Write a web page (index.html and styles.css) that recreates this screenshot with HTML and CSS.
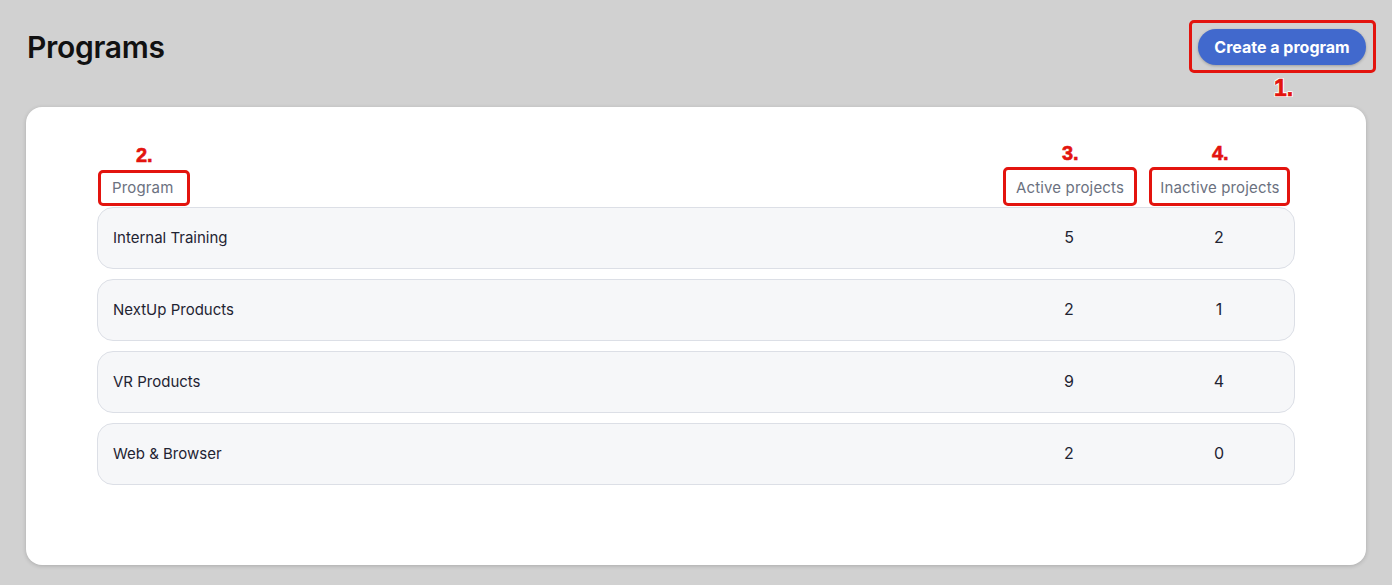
FILE: index.html
```html
<!DOCTYPE html>
<html lang="en">
<head>
<meta charset="utf-8">
<title>Programs</title>
<link rel="stylesheet" href="styles.css">
</head>
<body>
<div class="page">
  <header class="topbar">
    <h1 class="title">Programs</h1>
    <button class="btn-primary">Create a program</button>
  </header>
  <main class="card">
    <div class="table">
      <div class="thead">
        <div class="th th-name">Program</div>
        <div class="th th-num">Active projects</div>
        <div class="th th-num">Inactive projects</div>
      </div>
      <div class="tbody">
        <div class="tr"><div class="td td-name">Internal Training</div><div class="td td-num">5</div><div class="td td-num">2</div></div>
        <div class="tr"><div class="td td-name">NextUp Products</div><div class="td td-num">2</div><div class="td td-num">1</div></div>
        <div class="tr"><div class="td td-name">VR Products</div><div class="td td-num">9</div><div class="td td-num">4</div></div>
        <div class="tr"><div class="td td-name">Web &amp; Browser</div><div class="td td-num">2</div><div class="td td-num">0</div></div>
      </div>
    </div>
  </main>

  <div class="anno-box anno-box-1"></div>
  <div class="anno-label anno-label-1">1.</div>
  <div class="anno-box anno-box-2"></div>
  <div class="anno-label anno-label-2">2.</div>
  <div class="anno-box anno-box-3"></div>
  <div class="anno-label anno-label-3">3.</div>
  <div class="anno-box anno-box-4"></div>
  <div class="anno-label anno-label-4">4.</div>
</div>
</body>
</html>
```

FILE: styles.css
```css
* { box-sizing: border-box; }
html, body { margin: 0; padding: 0; }
body {
  background: #d1d1d1;
  font-family: Inter, "Noto Sans", sans-serif;
  color: #1f2433;
}
.page {
  position: relative;
  padding: 29px 26px 20px 26px;
  min-height: 585px;
}
.topbar {
  display: flex;
  align-items: center;
  justify-content: space-between;
  height: 36px;
}
.title {
  margin: 0 0 0 1px;
  font-size: 30px;
  font-weight: 600;
  letter-spacing: -0.3px;
  color: #111;
}
.btn-primary {
  height: 36px;
  width: 168px;
  border: none;
  border-radius: 18px;
  background: #4169cd;
  color: #fff;
  font-family: Inter, "Noto Sans", sans-serif;
  font-size: 16px;
  font-weight: 700;
  letter-spacing: 0;
  padding: 0 12px;
  box-shadow: 0 1px 3px rgba(0,0,0,0.25);
}
.card {
  margin-top: 42px;
  background: #fff;
  border-radius: 16px;
  height: 458px;
  padding: 71px 71px 0 71px;
  box-shadow: 0 1px 4px rgba(0,0,0,0.18);
}
.thead, .tr {
  display: grid;
  grid-template-columns: 1fr 150px 150px;
  align-items: center;
}
.thead {
  height: 20px;
  margin-bottom: 9px;
  padding-bottom: 2px;
}
.th {
  font-size: 15px;
  color: #6b7180;
  letter-spacing: 0.15px;
}
.th-num, .td-num { text-align: center; }
.th-name { padding-left: 15px; }
.tbody {
  display: flex;
  flex-direction: column;
  gap: 10px;
}
.tr {
  height: 62px;
  background: #f6f7f9;
  border: 1px solid #dcdfe6;
  border-radius: 16px;
  padding-bottom: 2px;
}
.td {
  font-size: 15px;
  color: #1f2433;
}
.td-name { padding-left: 15px; }
.td-num { font-size: 16px; }

.anno-box {
  position: absolute;
  border: 3px solid #e3140e;
  border-radius: 5px;
}
.anno-box-1 { left: 1189px; top: 20px; width: 187px; height: 53px; }
.anno-box-2 { left: 98px; top: 170px; width: 92px; height: 36px; }
.anno-box-3 { left: 1003px; top: 167px; width: 134px; height: 39px; }
.anno-box-4 { left: 1149px; top: 167px; width: 141px; height: 39px; }
.anno-label {
  position: absolute;
  font-family: "Liberation Sans", Arial, sans-serif;
  font-weight: 700;
  color: #e3140e;
  font-size: 23px;
  line-height: 22px;
  -webkit-text-stroke: 0.6px #e3140e;
  text-shadow: -1px -1px 0 #fff, 1px -1px 0 #fff, -1px 1px 0 #fff, 1px 1px 0 #fff, 0 1px 0 #fff, 0 -1px 0 #fff, 1px 0 0 #fff, -1px 0 0 #fff;
}
.anno-label-1 { left: 1274px; top: 77px; }
.anno-label-2 { left: 136px; top: 144px; font-size: 20px; }
.anno-label-3 { left: 1062px; top: 142px; font-size: 20px; }
.anno-label-4 { left: 1212px; top: 142px; font-size: 20px; }
```
